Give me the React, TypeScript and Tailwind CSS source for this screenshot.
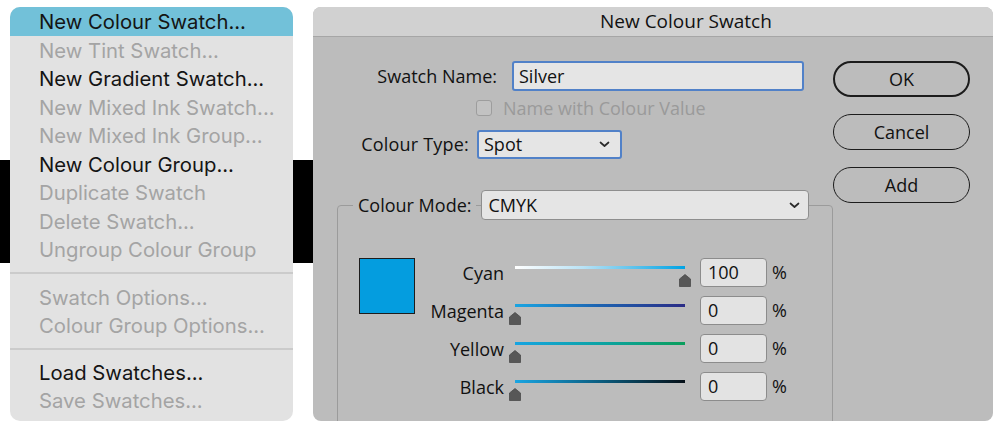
import type { ReactNode } from "react";

type MenuEntry = { label: string; enabled?: boolean; active?: boolean } | "sep";

const menuEntries: MenuEntry[] = [
  { label: "New Colour Swatch...", enabled: true, active: true },
  { label: "New Tint Swatch..." },
  { label: "New Gradient Swatch...", enabled: true },
  { label: "New Mixed Ink Swatch..." },
  { label: "New Mixed Ink Group..." },
  { label: "New Colour Group...", enabled: true },
  { label: "Duplicate Swatch" },
  { label: "Delete Swatch..." },
  { label: "Ungroup Colour Group" },
  "sep",
  { label: "Swatch Options..." },
  { label: "Colour Group Options..." },
  "sep",
  { label: "Load Swatches...", enabled: true },
  { label: "Save Swatches..." },
];

const inks = [
  { name: "Cyan", value: "100", grad: "bg-[linear-gradient(to_right,#ffffff,#b9e2f5_40%,#00a3e4)]", atEnd: true },
  { name: "Magenta", value: "0", grad: "bg-[linear-gradient(to_right,#1aa5e2,#1d62b0_50%,#2b2c86)]" },
  { name: "Yellow", value: "0", grad: "bg-[linear-gradient(to_right,#16a4e2,#0ca3a4_50%,#0b9e5c)]" },
  { name: "Black", value: "0", grad: "bg-[linear-gradient(to_right,#1aa5e2,#0b5d80_50%,#061018)]" },
];

const Chevron = () => (
  <svg width="11" height="7" viewBox="0 0 11 7" fill="none">
    <path d="M1.5 1.5 L5.5 5 L9.5 1.5" stroke="#2a2a2a" strokeWidth="1.7" strokeLinecap="round" strokeLinejoin="round" />
  </svg>
);

const Thumb = () => (
  <svg width="12" height="13" viewBox="0 0 12 13">
    <path d="M6 0.5 L11.5 5 V12.5 H0.5 V5 Z" fill="#575757" stroke="#4a4a4a" strokeWidth="0.8" strokeLinejoin="round" />
  </svg>
);

const Button = ({ children, primary }: { children: ReactNode; primary?: boolean }) => (
  <button
    type="button"
    className={`flex h-[36px] w-[137px] items-center justify-center rounded-full border-[#1c1c1c] text-[18px] text-[#111] ${
      primary ? "border-[2.5px]" : "border-[1.5px]"
    }`}
  >
    {children}
  </button>
);

export default function App() {
  return (
    <div className="flex h-[429px] w-[1000px] items-start gap-[20px] overflow-hidden bg-white bg-[linear-gradient(to_bottom,#fff_160px,#000_160px,#000_263px,#fff_263px)] bg-[length:400px_100%] bg-no-repeat pl-[10px] pt-[7px]">
      {/* context menu */}
      <div className="flex h-[414px] w-[283px] flex-col overflow-hidden rounded-[10px] bg-[#e2e2e2] font-['Inter',sans-serif]">
        {menuEntries.map((entry, i) =>
          entry === "sep" ? (
            <div key={`sep-${i}`} className={`flex items-center ${i === 9 ? "h-[19.25px]" : "h-[18px]"}`}>
              <div className="h-[2px] w-full bg-[#cbcbcb]" />
            </div>
          ) : (
            <div
              key={entry.label}
              className={`flex h-[28.5px] shrink-0 items-center pl-[29px] pt-[2px] text-[20.3px] leading-none ${
                entry.active ? "bg-[#72c1d9]" : ""
              } ${entry.enabled ? "text-[#141414]" : "text-[#a4a4a4]"}`}
            >
              {entry.label}
            </div>
          )
        )}
      </div>

      {/* dialog */}
      <div className="flex h-[414px] w-[680px] flex-col overflow-hidden rounded-[8px] bg-[#bcbcbc] font-['Open_Sans',sans-serif] font-medium text-[#111]">
        <div className="flex h-[30px] shrink-0 items-center border-b border-[#a6a6a6] bg-[#d1d1d1] pl-[287px] text-[19px]">
          New Colour Swatch
        </div>

        <div className="flex pt-[24px]">
          <div className="flex w-[520px] flex-col">
            <div className="flex h-[30px] items-center">
              <span className="w-[184px] text-right text-[18px]">Swatch Name:</span>
              <div className="ml-[15px] flex h-[30px] w-[292px] items-center rounded-[3px] border-2 border-[#5181c8] bg-[#e5e5e5] pl-[5px] text-[18px]">
                Silver
              </div>
            </div>
            <div className="mt-[9px] flex h-[16px] items-center pl-[163px]">
              <div className="h-[16px] w-[16px] rounded-[3px] border border-[#9d9d9d] bg-[#c2c2c2]" />
              <span className="ml-[11px] text-[18px] leading-none text-[#9a9a9a]">Name with Colour Value</span>
            </div>
            <div className="mt-[14px] flex h-[29px] items-center">
              <span className="w-[156px] text-right text-[18px] tracking-[0.2px]">Colour Type:</span>
              <div className="ml-[8px] flex h-[29px] w-[145px] items-center justify-between rounded-[3px] border-2 border-[#5181c8] bg-[#e5e5e5] pl-[5px] pr-[10px] text-[18px]">
                <span>Spot</span>
                <Chevron />
              </div>
            </div>
          </div>

          <div className="flex flex-col gap-[17px]">
            <Button primary>OK</Button>
            <Button>Cancel</Button>
            <Button>Add</Button>
          </div>
        </div>

        {/* colour mode group */}
        <div className="ml-[24px] mt-[2px] h-[300px] w-[496px] shrink-0 rounded-[4px] border border-[#9b9b9b]">
          <div className="-mt-[16px] flex items-center pl-[15px]">
            <span className="bg-[#bcbcbc] px-[5px] text-[18px]">Colour Mode:</span>
            <div className="ml-[5px] flex h-[30px] w-[328px] items-center justify-between rounded-[4px] border border-[#8e8e8e] bg-[#e5e5e5] pl-[6px] pr-[8px] text-[18px]">
              <span>CMYK</span>
              <Chevron />
            </div>
          </div>

          <div className="mt-[38px] flex">
            <div className="ml-[21px] h-[56px] w-[56px] border border-[#1d1d1d] bg-[#049ddf]" />
            <div className="flex flex-col gap-[9px]">
              {inks.map((ink) => (
                <div key={ink.name} className="flex h-[29px] items-center">
                  <span className="w-[89px] pt-[2px] text-right text-[18px]">{ink.name}</span>
                  <div className="relative ml-[11px] h-[29px] w-[170px]">
                    <div className={`mt-[8px] h-[3px] w-full ${ink.grad}`} />
                    <div className={`absolute top-[16px] ${ink.atEnd ? "right-[-6px]" : "left-[-6px]"}`}>
                      <Thumb />
                    </div>
                  </div>
                  <div className="ml-[15px] flex h-[29px] w-[67px] items-center rounded-[4px] border border-[#8c8c8c] bg-[#e3e3e3] pl-[7px] text-[18px]">
                    {ink.value}
                  </div>
                  <span className="ml-[5px] text-[18px]">%</span>
                </div>
              ))}
            </div>
          </div>
        </div>
      </div>
    </div>
  );
}
